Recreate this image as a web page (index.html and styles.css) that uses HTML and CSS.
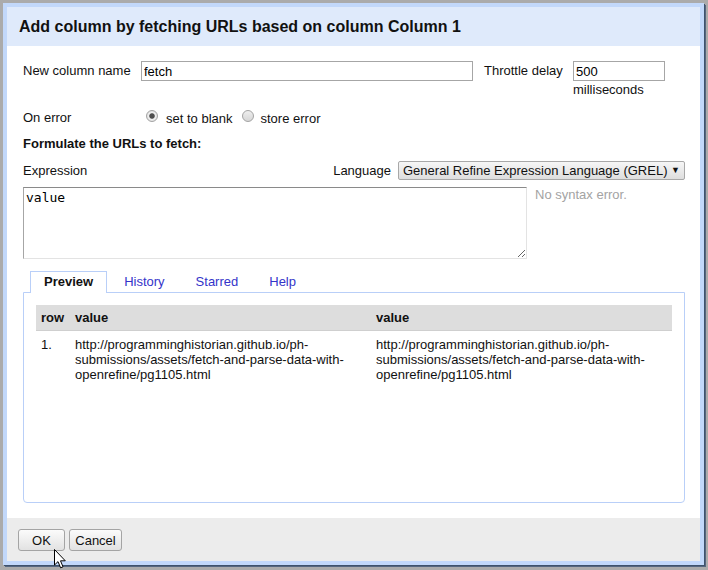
FILE: index.html
```html
<!DOCTYPE html>
<html>
<head>
<meta charset="utf-8">
<link rel="stylesheet" href="styles.css">
</head>
<body>
<div class="dialog">
  <div class="dialog-header">Add column by fetching URLs based on column Column 1</div>
  <div class="dialog-body">
    <div class="row-name">
      <span class="lbl">New column name</span>
      <input class="txt name" type="text" value="fetch">
      <span class="lbl-throttle">Throttle delay</span>
      <div class="throttle">
        <input class="txt delay" type="text" value="500">
        <div class="unit">milliseconds</div>
      </div>
    </div>
    <div class="row-error">
      <span class="lbl">On error</span>
      <span class="radio checked"></span><span class="opt">set to blank</span>
      <span class="radio second"></span><span class="opt">store error</span>
    </div>
    <div class="section-title">Formulate the URLs to fetch:</div>
    <div class="row-expr">
      <span>Expression</span>
      <div class="lang">
        <span>Language</span>
        <div class="select"><span>General Refine Expression Language (GREL)</span><span class="arrow">&#9660;</span></div>
      </div>
    </div>
    <div class="row-code">
      <textarea class="code">value</textarea>
      <div class="status">No syntax error.</div>
    </div>
    <div class="tabs">
      <div class="tab active">Preview</div>
      <div class="tab">History</div>
      <div class="tab">Starred</div>
      <div class="tab">Help</div>
    </div>
    <div class="panel">
      <table class="preview">
        <colgroup><col class="c-row"><col class="c-val"><col class="c-val2"></colgroup>
        <thead>
          <tr><th>row</th><th>value</th><th>value</th></tr>
        </thead>
        <tbody>
          <tr>
            <td>1.</td>
            <td>http://programminghistorian.github.io/ph-submissions/assets/fetch-and-parse-data-with-openrefine/pg1105.html</td>
            <td>http://programminghistorian.github.io/ph-submissions/assets/fetch-and-parse-data-with-openrefine/pg1105.html</td>
          </tr>
        </tbody>
      </table>
    </div>
  </div>
  <div class="dialog-footer">
    <button class="btn ok">OK</button>
    <button class="btn cancel">Cancel</button>
  </div>
</div>
<svg class="cursor" width="14" height="22" viewBox="0 0 14 22">
  <path d="M1.5 1.5 L1.5 17 L5 13.6 L7.6 19.8 L10 18.8 L7.5 12.8 L12.3 12.8 Z" fill="#fff" stroke="#000" stroke-width="1" stroke-linejoin="miter"/>
</svg>
</body>
</html>
```
FILE: styles.css
```css
* { box-sizing: border-box; }
html, body { margin: 0; padding: 0; }
body {
  background: #ababab;
  width: 708px;
  height: 570px;
  overflow: hidden;
  position: relative;
  font-family: "Liberation Sans", Arial, sans-serif;
  font-size: 13px;
  color: #111;
}
.dialog {
  margin: 3px 0 0 3px;
  width: 701px;
  height: 562px;
  border: 4px solid #c2d8fa;
  box-shadow: 1px 1px 0 #3f526b, 2px 2px 0 #566780;
  background: #fff;
  display: flex;
  flex-direction: column;
}
.dialog-header {
  height: 39px;
  background: #dfeafb;
  font-size: 16px;
  font-weight: bold;
  line-height: 39px;
  padding-left: 12px;
  color: #111;
}
.dialog-body {
  flex: 1;
  padding: 15px 15px 15px 16px;
  display: flex;
  flex-direction: column;
}
.row-name {
  display: flex;
  align-items: flex-start;
  height: 36px;
}
.lbl {
  width: 118px;
  flex: none;
  line-height: 20px;
}
.txt {
  height: 20px;
  border: 1px solid #a6a6a6;
  font-family: "Liberation Sans", Arial, sans-serif;
  font-size: 13px;
  padding: 0 2px;
  color: #000;
  background: #fff;
  margin: 0;
  outline: none;
}
.name { width: 332px; }
.lbl-throttle {
  margin-left: 11px;
  width: 89px;
  line-height: 20px;
}
.throttle { display: flex; flex-direction: column; }
.delay { width: 92px; }
.unit { line-height: 16px; margin-top: 1px; }
.row-error {
  display: flex;
  align-items: center;
  margin-top: 11px;
  height: 20px;
}
.radio {
  width: 12px;
  height: 12px;
  border-radius: 50%;
  border: 1px solid #a3a3a3;
  background: linear-gradient(#eeeeee, #d6d6d6);
  margin: 0 8px 0 5px;
  position: relative;
  top: -2px;
  flex: none;
}
.radio.checked {
  background: radial-gradient(circle at center, #4f4f4f 0, #4f4f4f 2.3px, #f2f2f2 3.2px, #e2e2e2 5px);
}
.radio.second { margin: 0 7px 0 9px; }
.section-title {
  font-weight: bold;
  line-height: 15px;
  margin-top: 8px;
}
.row-expr {
  margin-top: 9px;
  display: flex;
  justify-content: space-between;
  align-items: center;
  height: 20px;
}
.lang { display: flex; align-items: center; }
.select {
  margin-left: 7px;
  width: 287px;
  height: 19px;
  border: 1px solid #a8a8a8;
  border-radius: 2px;
  background: linear-gradient(#f6f6f6, #dedede);
  display: flex;
  justify-content: space-between;
  align-items: center;
  padding: 0 4px 0 4px;
  color: #111;
}
.arrow { font-size: 9px; }
.row-code {
  margin-top: 7px;
  display: flex;
  align-items: flex-start;
}
.code {
  width: 504px;
  height: 72px;
  margin: 0;
  border-style: solid;
  border-width: 1px;
  border-color: #8a8a8a #e3e3e3 #e3e3e3 #a6a6a6;
  font-family: "DejaVu Sans Mono", monospace;
  font-size: 13px;
  line-height: 17px;
  padding: 1px 2px;
  color: #000;
  resize: both;
  outline: none;
}
.status {
  margin-left: 8px;
  color: #a3a3a3;
  line-height: 15px;
  margin-top: 0;
}
.tabs {
  margin-top: 12px;
  display: flex;
  padding-left: 7px;
  height: 22px;
  position: relative;
  z-index: 1;
}
.tab {
  padding: 0 13px;
  line-height: 20px;
  margin-right: 3px;
  color: #3434c9;
  border: 1px solid transparent;
  border-bottom: none;
}
.tab.active {
  color: #111;
  font-weight: bold;
  background: #fff;
  border-color: #b9cff8;
  height: 22px;
}
.panel {
  margin-top: -1px;
  flex: 1;
  border: 1px solid #b9cff8;
  border-radius: 0 0 4px 4px;
  padding: 12px 12px 0 12px;
}
.preview {
  width: 636px;
  border-collapse: collapse;
  table-layout: fixed;
}
.c-row { width: 34px; }
.c-val { width: 301px; }
.c-val2 { width: 301px; }
.preview th {
  background: #dddddd;
  text-align: left;
  font-weight: bold;
  height: 25px;
  padding: 0 5px;
  border-bottom: 1px solid #cfcfcf;
}
.preview td {
  vertical-align: top;
  padding: 6px 5px;
  line-height: 15px;
}
.dialog-footer {
  height: 43px;
  background: #ececec;
  display: flex;
  align-items: flex-start;
  padding: 11px 0 0 11px;
  gap: 4px;
}
.btn {
  height: 22px;
  border: 1px solid #a4a4a4;
  border-radius: 3px;
  background: linear-gradient(#fbfbfb, #e2e2e2);
  font-family: "Liberation Sans", Arial, sans-serif;
  font-size: 13px;
  color: #111;
  padding: 0;
  margin: 0;
}
.ok { width: 47px; }
.cancel { width: 53px; }
.cursor {
  position: absolute;
  left: 53px;
  top: 548px;
}
```
